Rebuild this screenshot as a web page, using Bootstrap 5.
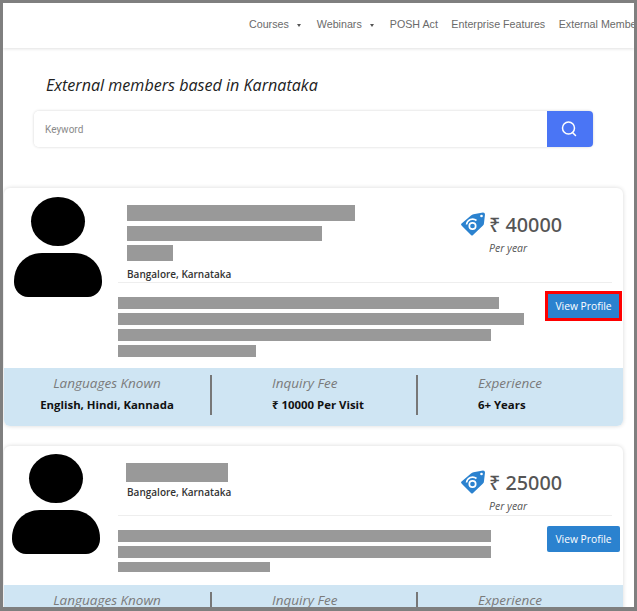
<!DOCTYPE html>
<html lang="en">
<head>
<meta charset="utf-8">
<title>External members</title>
<link href="https://cdn.jsdelivr.net/npm/bootstrap@5.3.0/dist/css/bootstrap.min.css" rel="stylesheet">
<style>
html,body{height:100%;overflow:hidden;background:#fff}
body{font-family:"Open Sans","Noto Sans",sans-serif}
.frame{height:611px;border:3px solid #7f7f7f;border-bottom-width:4px;overflow:hidden;background:#fff}
.topnav{height:45px;box-shadow:0 1px 3px rgba(0,0,0,.12);padding-left:246px;padding-bottom:2px;font:10.700px/1 "Liberation Sans",Arial,sans-serif;white-space:nowrap;overflow:hidden}
.topnav a{color:#6a6a6a;text-decoration:none;margin-right:13.500px}
.topnav .caret{display:inline-block;border:2.500px solid transparent;border-top:3.500px solid #555;border-bottom:0;margin:0 16px 0 8px;vertical-align:middle}
.topnav a.has-caret{margin-right:0}
.page-title{font-size:16.100px;font-style:italic;font-weight:400;line-height:22px;color:#222;margin:26px 0 15px 43px}
.search-box{margin:0 41px 41px 31px;height:36px;border-radius:5px;box-shadow:0 0 3px rgba(0,0,0,.18)}
.search-box input{font-size:10px;border:0;padding:0 0 0 11px;height:36px;font-family:"Roboto",sans-serif;border-radius:5px 0 0 5px;box-shadow:none}
.search-box input::placeholder{color:#8a8a8a}
.search-btn{width:46px;height:36px;background:#4a75f5;border-radius:0 4px 4px 0;padding:0 2px 4px 0;border:0}
.member{margin:0 11px 20px 1px;border:0;border-radius:6px;box-shadow:0 0 4px rgba(0,0,0,.16);overflow:hidden}
.avatar{width:114px;padding-top:9px;padding-left:9px;flex:none}
.avatar.second{padding-top:8px;padding-left:7px}
.top-row{border-bottom:1px solid #eee;margin-right:11px}
.first .top-row{height:95px}
.second .top-row{height:70px}
.name-col{padding-left:9px;width:343px;flex:none}
.first .name-col{padding-top:17px}
.second .name-col{padding-top:17px;padding-left:8px}
.gb{background:#999;display:block}
.w228{width:228px;height:16px;margin-bottom:5px}
.w195{width:195px;height:15px;margin-bottom:4px}
.w46{width:46px;height:16px}
.w102{width:102px;height:19px}
.city{font-size:10px;font-weight:600;line-height:15px;color:#333;display:block;white-space:nowrap}
.second .city{margin-left:1px;margin-top:3px}
.first .city{margin-top:6px}
.price-col{padding-top:23.500px;flex:1}
.price-line{font-family:"Noto Sans",sans-serif;font-size:19.800px;line-height:24px;color:#555;font-weight:500;white-space:nowrap}
.price-line svg{margin-right:4px;vertical-align:-4px}
.per{font-size:10.500px;font-style:italic;font-weight:500;color:#555;margin:4.500px 0 0 28px;line-height:14px}
.bars{width:429px;flex:none}
.first .bars{padding-top:14px;height:85px}
.second .bars{padding-top:14px;height:69px}
.bars .gb{height:12px;margin-bottom:4px}
.w381{width:381px}.w406{width:406px}.w373{width:373px}.w138{width:138px}.w152{width:152px;height:10px!important}
.view-btn{background:#2b82cf;color:#fff;font-size:10.300px;line-height:14px;border:0;border-radius:2px;padding:0;width:73px;height:26px;flex:none;font-family:"Open Sans",sans-serif;margin-top:10px}
.view-btn.hl{outline:3px solid #f00;border-radius:0;margin:11px 0 0 1px;width:71px;height:24px}
.foot{background:#cfe5f3;height:58px;padding-top:7px}
.fcol{width:208px;flex:none;height:40px;border-right:2px solid #777;text-align:center}
.fcol:nth-child(2){width:206px;text-align:left;padding-left:60px}
.fcol:nth-child(3){border:0;text-align:left;padding-left:60px;flex:1}
.ft{font-size:13.500px;font-style:italic;font-weight:500;color:#7a7a7a;line-height:18px;margin-top:-1px}
.fv{font-size:11.400px;font-weight:700;color:#111;line-height:16px;margin-top:5px;white-space:nowrap}
</style>
</head>
<body>
<div class="frame">
  <nav class="topnav d-flex align-items-center">
    <a class="has-caret" href="#">Courses<span class="caret"></span></a>
    <a class="has-caret" href="#">Webinars<span class="caret"></span></a>
    <a href="#">POSH Act</a>
    <a href="#">Enterprise Features</a>
    <a href="#">External Members</a>
  </nav>
  <h1 class="page-title">External members based in Karnataka</h1>
  <div class="search-box d-flex">
    <input class="form-control" type="text" placeholder="Keyword">
    <button class="search-btn btn flex-shrink-0" type="button" aria-label="Search">
      <svg width="18" height="18" viewBox="0 0 18 18" fill="none" stroke="#fff" stroke-width="1.500"><circle cx="8.500" cy="8" r="6"/><path d="M12.500 12.500l3 3" stroke-linecap="round"/></svg>
    </button>
  </div>

  <div class="card member first">
    <div class="d-flex">
      <div class="avatar">
        <svg width="90" height="100" viewBox="0 0 90 100"><ellipse cx="45" cy="24.500" rx="27" ry="24.500" fill="#000"/><path d="M29 56h32c16 0 28 12 28 28v1c0 8-6 15-14 15H15c-8 0-14-7-14-15v-1c0-16 12-28 28-28z" fill="#000"/></svg>
      </div>
      <div class="flex-grow-1">
        <div class="top-row d-flex">
          <div class="name-col">
            <span class="gb w228"></span><span class="gb w195"></span><span class="gb w46"></span>
            <span class="city">Bangalore, Karnataka</span>
          </div>
          <div class="price-col">
            <div class="price-line"><svg width="24" height="24" viewBox="0 0 24 24"><path d="M0 12L10 3.500Q11 2.500 12.500 2.200L22 .5Q24 .5 24 2.500L23 11Q23 12.500 22 13.500L12 23Q11 24 10 23L1 14Q0 13 0 12z" fill="#2b82cf"/><circle cx="11.500" cy="14" r="3.200" fill="none" stroke="#fff" stroke-width="1.700"/><path d="M5.500 12.500A6.200 6.200 0 0 1 15.500 8.500" fill="none" stroke="#fff" stroke-width="1.600"/><circle cx="20.500" cy="4" r="1.300" fill="#fff"/></svg>₹ 40000</div>
            <div class="per">Per year</div>
          </div>
        </div>
        <div class="d-flex">
          <div class="bars"><span class="gb w381"></span><span class="gb w406"></span><span class="gb w373"></span><span class="gb w138"></span></div>
          <button class="view-btn hl" type="button">View Profile</button>
        </div>
      </div>
    </div>
    <div class="foot d-flex">
      <div class="fcol"><div class="ft">Languages Known</div><div class="fv">English, Hindi, Kannada</div></div>
      <div class="fcol"><div class="ft">Inquiry Fee</div><div class="fv">₹ 10000 Per Visit</div></div>
      <div class="fcol"><div class="ft">Experience</div><div class="fv">6+ Years</div></div>
    </div>
  </div>

  <div class="card member second">
    <div class="d-flex">
      <div class="avatar second">
        <svg width="90" height="100" viewBox="0 0 90 100"><ellipse cx="45" cy="24.500" rx="27" ry="24.500" fill="#000"/><path d="M29 56h32c16 0 28 12 28 28v1c0 8-6 15-14 15H15c-8 0-14-7-14-15v-1c0-16 12-28 28-28z" fill="#000"/></svg>
      </div>
      <div class="flex-grow-1">
        <div class="top-row d-flex">
          <div class="name-col">
            <span class="gb w102"></span>
            <span class="city">Bangalore, Karnataka</span>
          </div>
          <div class="price-col">
            <div class="price-line"><svg width="24" height="24" viewBox="0 0 24 24"><path d="M0 12L10 3.500Q11 2.500 12.500 2.200L22 .5Q24 .5 24 2.500L23 11Q23 12.500 22 13.500L12 23Q11 24 10 23L1 14Q0 13 0 12z" fill="#2b82cf"/><circle cx="11.500" cy="14" r="3.200" fill="none" stroke="#fff" stroke-width="1.700"/><path d="M5.500 12.500A6.200 6.200 0 0 1 15.500 8.500" fill="none" stroke="#fff" stroke-width="1.600"/><circle cx="20.500" cy="4" r="1.300" fill="#fff"/></svg>₹ 25000</div>
            <div class="per">Per year</div>
          </div>
        </div>
        <div class="d-flex">
          <div class="bars"><span class="gb w373"></span><span class="gb w373"></span><span class="gb w152"></span></div>
          <button class="view-btn" type="button">View Profile</button>
        </div>
      </div>
    </div>
    <div class="foot d-flex">
      <div class="fcol"><div class="ft">Languages Known</div></div>
      <div class="fcol"><div class="ft">Inquiry Fee</div></div>
      <div class="fcol"><div class="ft">Experience</div></div>
    </div>
  </div>
</div>
</body>
</html>
